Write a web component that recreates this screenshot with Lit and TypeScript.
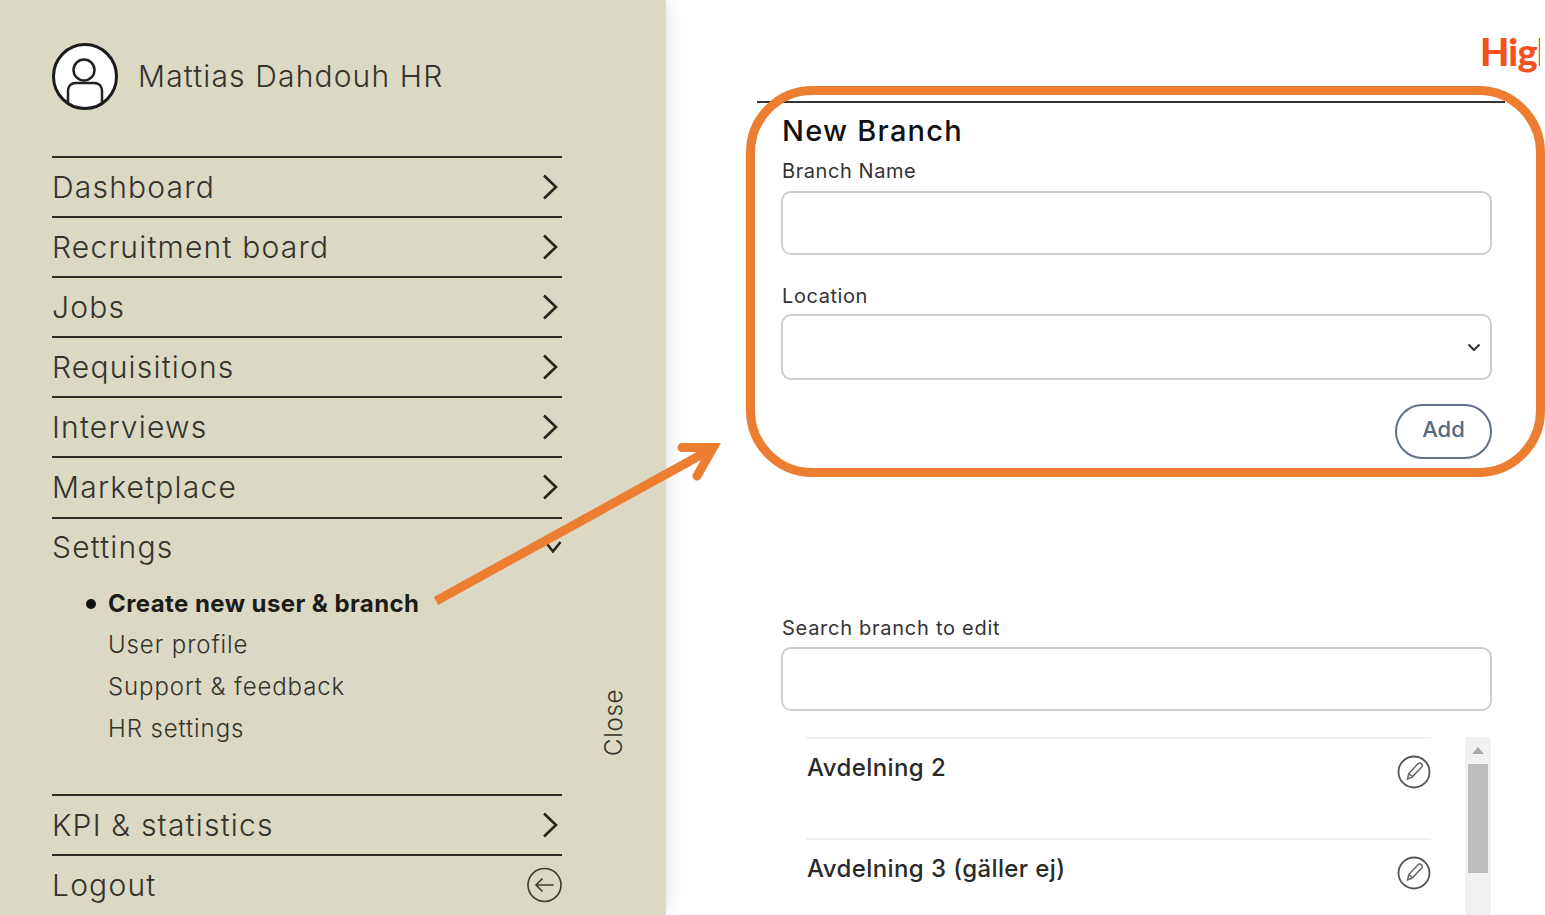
import { LitElement, css, html, svg } from 'lit'
import { customElement } from 'lit/decorators.js'

const chevronRight = html`<svg class="chev" width="16" height="26" viewBox="0 0 16 26"><path d="M2 1.5 14 13 2 24.5" fill="none" stroke="#26261f" stroke-width="2.6"/></svg>`
const chevronDown = html`<svg class="chev" width="18" height="14" viewBox="0 0 18 14"><path d="M1.5 2 9 11.5 16.5 2" fill="none" stroke="#26261f" stroke-width="2.6"/></svg>`
const logoutIcon = html`<svg width="36" height="36" viewBox="0 0 36 36"><circle cx="18.500" cy="18" r="16.500" fill="none" stroke="#3a3a32" stroke-width="1.6"/><path d="M27.500 18H10.500M16.500 11.500 10 18l6.500 6.500" fill="none" stroke="#3a3a32" stroke-width="1.6"/></svg>`
const pencilIcon = html`<svg width="34" height="34" viewBox="0 0 34 34"><circle cx="17" cy="17" r="15.500" fill="none" stroke="#555" stroke-width="1.800"/><path d="M10.500 24l1.300-5.500 9.200-9.700c1-1 2.500-1 3.500 0s1 2.500 0 3.500l-9.300 9.800zM11.800 18.500l4 3.800" fill="none" stroke="#666" stroke-width="1.500"/></svg>`

const topItems = ['Dashboard', 'Recruitment board', 'Jobs', 'Requisitions', 'Interviews', 'Marketplace']
const subItems = ['Create new user & branch', 'User profile', 'Support & feedback', 'HR settings']

@customElement('app-root')
export class AppRoot extends LitElement {
  static styles = css`
    :host {
      display: flex;
      width: 1545px;
      height: 915px;
      overflow: hidden;
      position: relative;
      background: #fff;
      font-family: Inter, 'Liberation Sans', sans-serif;
      color: #33332c;
    }
    .sidebar {
      width: 666px;
      height: 915px;
      flex: none;
      display: flex;
      box-sizing: border-box;
      padding-left: 52px;
      background: #dbd8c4;
      box-shadow: 0 0 18px rgba(0, 0, 0, 0.14);
    }
    .nav {
      width: 510px;
      flex: none;
    }
    .profile {
      display: flex;
      gap: 20px;
      height: 113px;
      padding-top: 43px;
      box-sizing: border-box;
      align-items: flex-start;
      font-size: 30px;
      letter-spacing: 1.15px;
      font-weight: 300;
    }
    .profile span {
      line-height: 66px;
    }
    .menu {
      margin-top: 43px;
    }
    .row {
      height: 60.1px;
      box-sizing: border-box;
      border-top: 2px solid #2c2c25;
      display: flex;
      align-items: center;
      justify-content: space-between;
      font-size: 30px;
      font-weight: 300;
      letter-spacing: 1.2px;
      padding-right: 4px;
      padding-bottom: 1px;
    }
    .row.plain {
      padding-right: 0;
    }
    .sub {
      height: 217.500px;
      box-sizing: border-box;
      padding: 6px 0 0 56px;
      font-size: 24px;
      font-weight: 300;
      letter-spacing: 0.9px;
    }
    .sub div {
      height: 41.800px;
      line-height: 41.800px;
      position: relative;
    }
    .sub .active {
      font-weight: 700;
      letter-spacing: 0.42px;
      color: #1c1c18;
    }
    .sub .active::before {
      content: '';
      position: absolute;
      left: -22px;
      top: 16px;
      width: 10px;
      height: 10px;
      border-radius: 50%;
      background: #111;
    }
    .close {
      margin: 690px 0 0 40px;
      height: 66px;
      writing-mode: vertical-rl;
      transform: rotate(180deg);
      font-size: 24px;
      font-weight: 300;
      line-height: 24px;
      letter-spacing: 0.7px;
      white-space: nowrap;
    }
    .main {
      flex: 1;
      padding-left: 91px;
    }
    .brand {
      height: 101px;
      width: 783px;
      box-sizing: border-box;
      display: flex;
      justify-content: flex-end;
      padding-top: 26px;
    }
    .brand span {
      width: 60px;
      height: 50px;
      overflow: hidden;
      font-family: Lato, sans-serif;
      font-size: 38px;
      line-height: 50px;
      font-weight: 900;
      letter-spacing: -0.8px;
      color: #f4511e;
      white-space: nowrap;
    }
    .form {
      width: 748px;
      border-top: 2px solid #333;
      padding: 0 0 0 24px;
      box-sizing: border-box;
    }
    .form h2 {
      margin: 10px 0 0 1px;
      height: 36px;
      line-height: 36px;
      font-size: 29px;
      font-weight: 500;
      color: #111;
      letter-spacing: 1.25px;
    }
    label {
      display: block;
      margin-left: 1px;
      font-size: 20px;
      line-height: 26px;
      color: #333;
      letter-spacing: 0.57px;
    }
    .field {
      width: 711px;
      height: 64px;
      box-sizing: border-box;
      border: 2px solid #cdcdcd;
      border-radius: 10px;
      background: #fff;
      display: flex;
      align-items: center;
      justify-content: flex-end;
      padding-right: 9px;
    }
    .name-label {
      margin-top: 9px;
      margin-bottom: 7px;
    }
    .loc-label {
      margin-top: 28px;
      margin-bottom: 5px;
    }
    .field.tall {
      height: 66px;
    }
    .actions {
      width: 711px;
      display: flex;
      justify-content: flex-end;
      margin-top: 24px;
    }
    .add {
      width: 97px;
      height: 55px;
      box-sizing: border-box;
      border: 2px solid #5f7086;
      border-radius: 28px;
      background: #fff;
      font: 500 22px Inter, sans-serif;
      color: #56687e;
      padding: 0 0 5px;
    }
    .search-wrap {
      padding-left: 24px;
    }
    .search {
      margin: 156px 0 6px;
    }
    .search label {
      margin-left: 1px;
      letter-spacing: 0.73px;
    }
    .list {
      width: 710px;
      height: 178px;
      margin-top: 26px;
      display: flex;
      justify-content: space-between;
    }
    .items {
      width: 625px;
      margin-left: 25px;
    }
    .item {
      height: 101px;
      box-sizing: border-box;
      border-top: 2px solid #f0f0f0;
      display: flex;
      justify-content: space-between;
      font-size: 24px;
      font-weight: 500;
      color: #2a2a2a;
      line-height: 58px;
      letter-spacing: 0.4px;
    }
    .item span {
      margin-left: 1px;
    }
    .item svg {
      margin-top: 16px;
    }
    .scroll {
      width: 26px;
      height: 178px;
      background: #f1f1f1;
      box-sizing: border-box;
      padding: 10px 3px 0;
    }
    .scroll i {
      display: block;
      width: 0;
      height: 0;
      margin: 0 auto 10px;
      border: 6px solid transparent;
      border-top: 0;
      border-bottom: 7px solid #a8a8a8;
    }
    .scroll b {
      display: block;
      height: 109px;
      background: #bdbdbd;
    }
    .notes {
      position: absolute;
      left: 0;
      top: 0;
      pointer-events: none;
    }
  `

  render() {
    return html`
      <aside class="sidebar">
        <div class="nav">
          <div class="profile">
            <svg width="66" height="68" viewBox="0 0 66 68">
              <ellipse cx="33" cy="33.500" rx="31.500" ry="32" fill="#fff" stroke="#1a1a1a" stroke-width="3"/>
              <circle cx="32" cy="27" r="10.500" fill="none" stroke="#222" stroke-width="2.500"/>
              <path d="M16 60V48c0-5 3-8 8-8h18c5 0 8 3 8 8v12" fill="none" stroke="#222" stroke-width="2.500"/>
            </svg>
            <span>Mattias Dahdouh HR</span>
          </div>
          <div class="menu">
            ${topItems.map(t => html`<div class="row"><span>${t}</span>${chevronRight}</div>`)}
            <div class="row plain"><span>Settings</span>${chevronDown}</div>
            <div class="sub">
              ${subItems.map((t, i) => html`<div class=${i === 0 ? 'active' : ''}>${t}</div>`)}
            </div>
            <div class="row"><span>KPI &amp; statistics</span>${chevronRight}</div>
            <div class="row plain"><span>Logout</span>${logoutIcon}</div>
          </div>
        </div>
        <div class="close">Close</div>
      </aside>
      <main class="main">
        <div class="brand"><span>High</span></div>
        <section class="form">
          <h2>New Branch</h2>
          <label class="name-label">Branch Name</label>
          <div class="field"></div>
          <label class="loc-label">Location</label>
          <div class="field tall">
            <svg width="14" height="9" viewBox="0 0 14 9"><path d="M1.500 1.500 7 7l5.500-5.500" fill="none" stroke="#333" stroke-width="2"/></svg>
          </div>
          <div class="actions"><button class="add">Add</button></div>
        </section>
        <section class="search-wrap">
          <div class="search"><label>Search branch to edit</label></div>
          <div class="field"></div>
          <div class="list">
            <div class="items">
              <div class="item"><span>Avdelning 2</span>${pencilIcon}</div>
              <div class="item"><span>Avdelning 3 (gäller ej)</span>${pencilIcon}</div>
            </div>
            <div class="scroll"><i></i><b></b></div>
          </div>
        </section>
      </main>
      <svg class="notes" width="1545" height="915" viewBox="0 0 1545 915">
        ${svg`
          <rect x="750.500" y="90.500" width="790" height="382" rx="62" fill="none" stroke="#ed7d31" stroke-width="9"/>
          <path d="M436 601 708 451" fill="none" stroke="#ed7d31" stroke-width="9"/>
          <path d="M682 447.500H713.200L697 476" fill="none" stroke="#ed7d31" stroke-width="9" stroke-linecap="round" stroke-miterlimit="8"/>
        `}
      </svg>
    `
  }
}
